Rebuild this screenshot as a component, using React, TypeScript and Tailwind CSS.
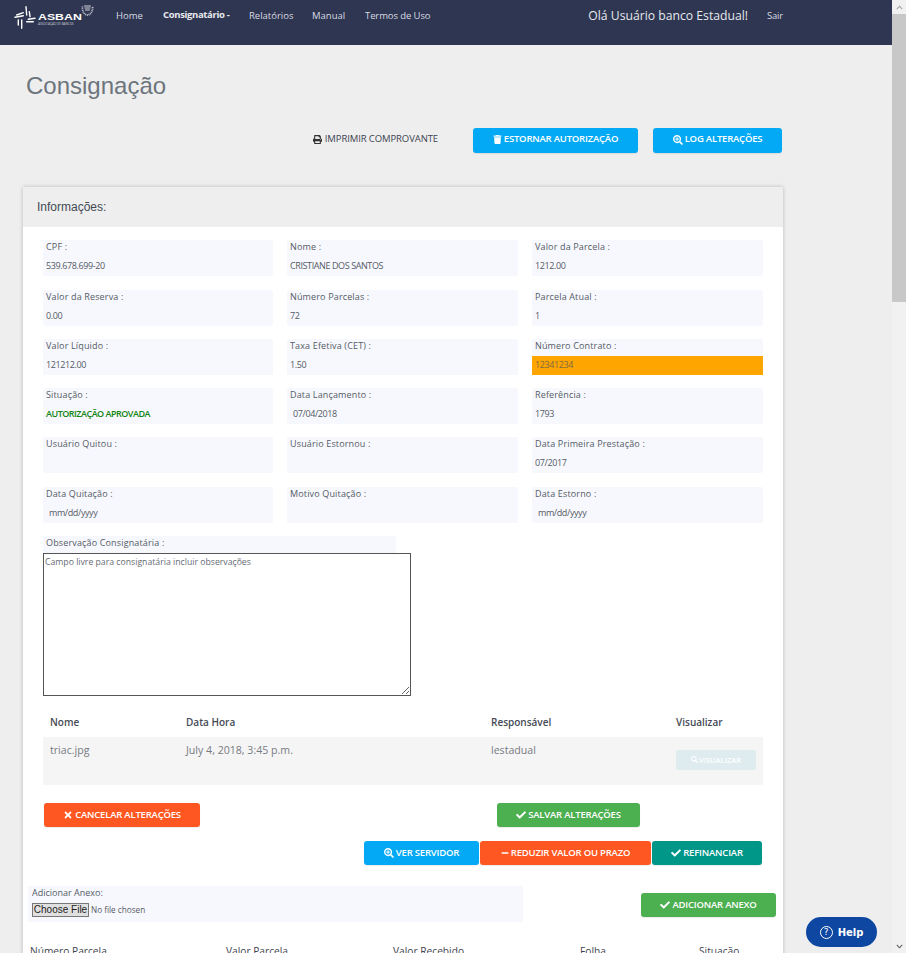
import { FaPrint, FaTrash, FaSearchPlus, FaTimes, FaCheck, FaMinus, FaSearch, FaChevronUp, FaChevronDown } from "react-icons/fa";
import type { ReactNode } from "react";

const Logo = () => (
  <div className="relative w-[84px] h-[30px] mt-[4px] ml-[14px] shrink-0">
    <svg width="84" height="30" viewBox="0 0 84 30" className="absolute left-0 top-0" fill="none" stroke="#fff" strokeLinecap="round">
      <path d="M2.7 11 L9.3 8.7 M1 13.3 L9.3 11.7 M12 2.7 L12.7 11 M15.3 7.7 L16 12.7 M14.3 15.3 L21 14.3 M12.7 17.7 L19.3 17.7 M7.7 16 L7.7 24.3 M4.3 16 L4.3 21" strokeWidth="1.4" />
      <path d="M68.5 2.5 C68 7 70 10.5 73.5 11 C77 10.5 79 7 78.5 2.5" strokeWidth="1.8" strokeDasharray="1 0.7" stroke="#b9bdca" strokeLinecap="butt" />
      <path d="M70.5 2 H76.5 M71 4 H76 M71.5 6 H75.5" strokeWidth="0.9" stroke="#e4e6ec" />
    </svg>
    <span className="absolute left-[24px] top-[8px] text-[8.5px] leading-[11px] font-bold text-white font-['Liberation_Sans',sans-serif] scale-x-[1.45] origin-left">ASBAN</span>
    <span className="absolute left-[24px] top-[18px] text-[3px] leading-[4px] text-[#cfd2da] whitespace-nowrap">ASSOCIAÇÃO DE BANCOS</span>
  </div>
);

const Field = ({ label, value, kind }: { label: string; value?: string; kind?: "orange" | "green" | "date" }) => (
  <div className="h-9 bg-[#f7f8fd] rounded-[2px] flex flex-col text-[#555b66] text-[9px]">
    <div className="h-[17px] pl-[3px] leading-[14px] tracking-[0.15px] whitespace-nowrap">{label}</div>
    <div className={
      "h-[19px] leading-[18px] tracking-[-0.4px] " +
      (kind === "orange" ? "bg-[#ffa500] pl-[3px] text-[#7d6a45]" :
       kind === "green" ? "pl-[3px] text-[#118411] font-semibold tracking-[-0.5px]" :
       kind === "date" ? "pl-[6px]" : "pl-[3px]")
    }>{value}</div>
  </div>
);

const Btn = ({ icon, children, className }: { icon: ReactNode; children: ReactNode; className: string }) => (
  <button className={"h-6 rounded-[3px] text-white text-[9.5px] font-semibold tracking-[-0.2px] flex items-center justify-center gap-[2px] shadow-[0_1px_1px_rgba(0,0,0,0.08)] " + className}>
    {icon}
    <span className="whitespace-nowrap">{children}</span>
  </button>
);

const fields: { label: string; value?: string; kind?: "orange" | "green" | "date" }[] = [
  { label: "CPF :", value: "539.678.699-20" },
  { label: "Nome :", value: "CRISTIANE DOS SANTOS" },
  { label: "Valor da Parcela :", value: "1212.00" },
  { label: "Valor da Reserva :", value: "0.00" },
  { label: "Número Parcelas :", value: "72" },
  { label: "Parcela Atual :", value: "1" },
  { label: "Valor Líquido :", value: "121212.00" },
  { label: "Taxa Efetiva (CET) :", value: "1.50" },
  { label: "Número Contrato :", value: "12341234", kind: "orange" },
  { label: "Situação :", value: "AUTORIZAÇÃO APROVADA", kind: "green" },
  { label: "Data Lançamento :", value: "07/04/2018", kind: "date" },
  { label: "Referência :", value: "1793" },
  { label: "Usuário Quitou :" },
  { label: "Usuário Estornou :" },
  { label: "Data Primeira Prestação :", value: "07/2017" },
  { label: "Data Quitação :", value: "mm/dd/yyyy", kind: "date" },
  { label: "Motivo Quitação :" },
  { label: "Data Estorno :", value: "mm/dd/yyyy", kind: "date" },
];

const nav = "text-[9.5px] text-[#d8dbe3] whitespace-nowrap";

export default function App() {
  return (
    <div className="w-[906px] h-[953px] overflow-hidden flex relative font-['Open_Sans',sans-serif]">
      <main className="w-[892px] h-[953px] overflow-hidden bg-[#eeeeee] shrink-0">
        <nav className="h-[45px] bg-[#2f3651] flex items-start">
          <Logo />
          <div className="flex items-center h-[32px] ml-[18px]">
            <span className={nav + " w-[47px]"}>Home</span>
            <span className={nav + " font-bold text-[#e8e9ee] -mt-[2px] tracking-[-0.35px] w-[86px]"}>Consignatário -</span>
            <span className={nav + " w-[63px]"}>Relatórios</span>
            <span className={nav + " w-[53px]"}>Manual</span>
            <span className={nav + " tracking-[-0.1px]"}>Termos de Uso</span>
          </div>
          <div className="ml-auto mr-[109px] flex items-center h-[32px] gap-[19px]">
            <span className="text-[12.2px] text-[#e6e8ee]">Olá Usuário banco Estadual!</span>
            <span className="text-[9.5px] text-[#d8dbe3] tracking-[-0.2px]">Sair</span>
          </div>
        </nav>

        <h1 className="pl-[26px] pt-[26px] text-[24px] leading-[30px] text-[#6c757d] font-['Liberation_Sans',sans-serif]">Consignação</h1>

        <div className="flex items-center justify-end mt-[27px] w-[782px] h-[25px]">
          <div className="flex items-center gap-[3px] text-[9.5px] text-[#3d4350] tracking-[-0.1px] mr-[35px] -mt-[2px]">
            <FaPrint className="text-[9px] text-[#333]" />
            <span>IMPRIMIR COMPROVANTE</span>
          </div>
          <Btn icon={<FaTrash className="text-[9px]" />} className="w-[165px] !h-[25px] pb-[2px] bg-[#03a9f4]">ESTORNAR AUTORIZAÇÃO</Btn>
          <Btn icon={<FaSearchPlus className="text-[10px]" />} className="w-[129px] !h-[25px] pb-[2px] ml-[15px] bg-[#03a9f4]">LOG ALTERAÇÕES</Btn>
        </div>

        <section className="ml-[23px] mt-[34px] w-[760px] h-[800px] bg-white shadow-[0_0_4px_rgba(0,0,0,0.22)]">
          <div className="h-10 bg-[#eeeeee] pl-[14px] flex items-center text-[12px] text-[#444a55] font-['Liberation_Sans',sans-serif]">Informações:</div>

          <div className="px-[20px] pt-[13.3px]">
            <div className="grid grid-cols-[230px_231px_231px] gap-x-[14px] gap-y-[13.3px]">
              {fields.map((f) => <Field key={f.label} {...f} />)}
            </div>

            <div className="mt-[13px] w-[353px] h-[17px] bg-[#f7f8fd] pl-[3px] text-[9px] leading-[14px] tracking-[0.15px] text-[#555b66]">Observação Consignatária :</div>
            <textarea
              readOnly
              defaultValue="Campo livre para consignatária incluir observações"
              className="block w-[368px] h-[143px] border border-[#555] text-[8.7px] leading-[12px] text-[#666b74] px-[1px] pt-[2px] bg-white outline-none resize"
            />

            <div className="mt-[12px] h-[29px] grid grid-cols-[136px_305px_185px_1fr] items-center pl-[7px] text-[10px] font-semibold text-[#444a55]">
              <span>Nome</span><span>Data Hora</span><span>Responsável</span><span>Visualizar</span>
            </div>
            <div className="h-[48px] bg-[#f5f5f5] grid grid-cols-[136px_305px_185px_1fr] pl-[7px] pt-[5px] text-[10.6px] leading-[16px] text-[#777b83]">
              <span>triac.jpg</span>
              <span>July 4, 2018, 3:45 p.m.</span>
              <span>lestadual</span>
              <span className="h-5 w-[80px] mt-[8px] rounded-[2px] bg-[#deecef] text-white text-[7.5px] flex items-center justify-center gap-[1px] font-semibold">
                <FaSearch className="text-[7px]" />VISUALIZAR
              </span>
            </div>

            <div className="mt-[18px] flex ml-[1px]">
              <Btn icon={<FaTimes className="text-[10px]" />} className="w-[156px] bg-[#ff5722]">CANCELAR ALTERAÇÕES</Btn>
              <Btn icon={<FaCheck className="text-[10px]" />} className="w-[143px] ml-[297px] bg-[#4caf50]">SALVAR ALTERAÇÕES</Btn>
            </div>
            <div className="mt-[14px] flex justify-end gap-[1px] mr-[1px]">
              <Btn icon={<FaSearchPlus className="text-[10px]" />} className="w-[115px] bg-[#03a9f4]">VER SERVIDOR</Btn>
              <Btn icon={<FaMinus className="text-[8px]" />} className="w-[171px] bg-[#ff5722]">REDUZIR VALOR OU PRAZO</Btn>
              <Btn icon={<FaCheck className="text-[10px]" />} className="w-[110px] bg-[#009688]">REFINANCIAR</Btn>
            </div>
          </div>

          <div className="mt-[21px] pl-[5px] flex items-start">
            <div className="w-[495px] h-[36px] bg-[#f7f8fd] pl-[4px] text-[9px] text-[#555b66]">
              <div className="h-[17px] leading-[14px]">Adicionar Anexo:</div>
              <input type="file" className="block text-[8.2px] leading-[12px] w-[300px] h-[15px] [&::file-selector-button]:font-['Liberation_Sans',sans-serif] [&::file-selector-button]:text-[10px] [&::file-selector-button]:text-[#222] [&::file-selector-button]:h-[14px] [&::file-selector-button]:w-[57px] [&::file-selector-button]:p-0 [&::file-selector-button]:bg-[#e0e0e0] [&::file-selector-button]:border [&::file-selector-button]:border-[#777] [&::file-selector-button]:mr-[2px]" />
            </div>
            <Btn icon={<FaCheck className="text-[10px]" />} className="w-[135px] mt-[7px] ml-[118px] bg-[#4caf50]">ADICIONAR ANEXO</Btn>
          </div>

          <div className="mt-[21px] ml-[7px] grid grid-cols-[196px_167px_187px_119px_1fr] text-[10.2px] leading-[16px] font-medium text-[#3f4550]">
            <span>Número Parcela</span><span>Valor Parcela</span><span>Valor Recebido</span><span>Folha</span><span>Situação</span>
          </div>
        </section>
      </main>

      <aside className="w-[14px] h-[953px] bg-[#f1f1f1] flex flex-col items-center shrink-0">
        <div className="h-[14px] flex items-center justify-center"><FaChevronUp className="text-[7px] text-[#a3a3a3]" /></div>
        <div className="w-[14px] h-[288px] bg-[#c8c8c8]" />
        <div className="mt-auto h-[14px] flex items-center justify-center"><FaChevronDown className="text-[7px] text-[#606060]" /></div>
      </aside>

      <button className="absolute left-[806px] top-[917px] w-[71px] h-[30px] rounded-full bg-[#0d47a1] text-white flex items-center justify-center gap-[5px] text-[10px] font-bold font-['DejaVu_Sans',sans-serif]">
        <span className="w-[13px] h-[13px] rounded-full border border-white text-[9px] leading-[11px] font-normal text-center">?</span>
        Help
      </button>
    </div>
  );
}
